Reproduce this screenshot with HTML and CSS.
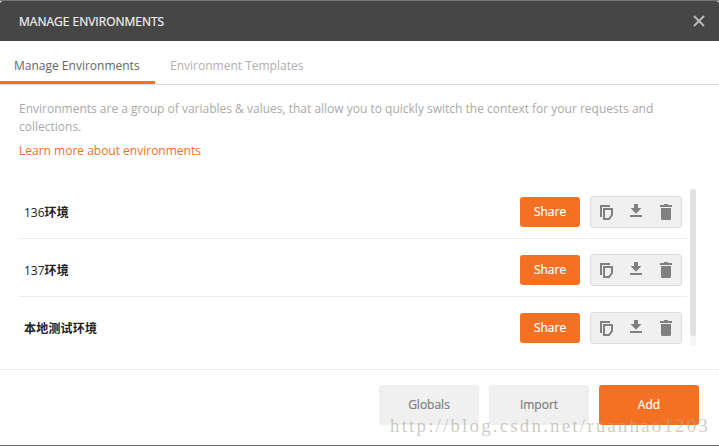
FILE: index.html
```html
<!DOCTYPE html>
<html lang="en">

<head>
    <meta charset="UTF-8">
    <meta name="viewport" content="width=device-width, initial-scale=1.0">
    <title>Manage Environments</title>
    <link rel="stylesheet" href="styles.css">
</head>

<body>
    <svg class="icon-defs">
        <symbol id="copy" viewBox="0 0 16 16">
            <path d="M3 13V2h9" fill="none" stroke="currentColor" stroke-width="2" />
            <path d="M6 5h8v6l-3 4H6z" fill="none" stroke="currentColor" stroke-width="2" />
        </symbol>
        <symbol id="download" viewBox="0 0 16 16">
            <path d="M6 0h4v4h3.5L8 9.8 2.5 4H6zM2 11h12v2H2z" fill="currentColor" />
        </symbol>
        <symbol id="trash" viewBox="0 0 16 16">
            <path d="M2 1h3.5l1-1h3l1 1H14v2H2zM3 4h10v10.5a1.5 1.5 0 0 1-1.5 1.5h-7A1.5 1.5 0 0 1 3 14.5z" fill="currentColor" />
        </symbol>
    </svg>

    <div class="modal">
        <header class="modal-header">
            <h1>MANAGE ENVIRONMENTS</h1>
            <svg class="close" viewBox="0 0 12 12">
                <path d="M1 1l10 10M11 1L1 11" fill="none" stroke="currentColor" stroke-width="2" />
            </svg>
        </header>

        <nav class="tabs">
            <div class="tab active">Manage Environments</div>
            <div class="tab">Environment Templates</div>
        </nav>

        <main>
            <p class="intro">Environments are a group of variables &amp; values, that allow you to quickly switch the context for your requests and<br>collections.</p>
            <a class="learn">Learn more about environments</a>

            <div class="list-wrap">
                <ul class="list">
                    <li class="row">
                        <span class="name">136<b>环境</b></span>
                        <button class="share">Share</button>
                        <div class="actions">
                            <svg class="icon"><use href="#copy" /></svg>
                            <svg class="icon"><use href="#download" /></svg>
                            <svg class="icon"><use href="#trash" /></svg>
                        </div>
                    </li>
                    <li class="row">
                        <span class="name">137<b>环境</b></span>
                        <button class="share">Share</button>
                        <div class="actions">
                            <svg class="icon"><use href="#copy" /></svg>
                            <svg class="icon"><use href="#download" /></svg>
                            <svg class="icon"><use href="#trash" /></svg>
                        </div>
                    </li>
                    <li class="row">
                        <span class="name"><b>本地测试环境</b></span>
                        <button class="share">Share</button>
                        <div class="actions">
                            <svg class="icon"><use href="#copy" /></svg>
                            <svg class="icon"><use href="#download" /></svg>
                            <svg class="icon"><use href="#trash" /></svg>
                        </div>
                    </li>
                </ul>
                <div class="scrollbar"><div class="thumb"></div></div>
            </div>
        </main>

        <footer>
            <button class="btn">Globals</button>
            <button class="btn">Import</button>
            <button class="btn primary">Add</button>
        </footer>
        <div class="watermark">http://blog.csdn.net/ruanhao1203</div>
    </div>
</body>

</html>
```
FILE: styles.css
```css
* {
    box-sizing: border-box;
}

body {
    margin: 0;
    background-color: #6c6c6c;
    font-family: "Open Sans", "Noto Sans CJK SC", sans-serif;
    font-size: 12px;
}

.icon-defs {
    display: none;
}

.modal {
    position: relative;
    display: flex;
    flex-direction: column;
    height: 446px;
    border-top: 1px solid #777;
    border-bottom: 1px solid #6c6c6c;
    background-color: #fff;
    overflow: hidden;
}

.modal-header {
    display: flex;
    align-items: center;
    justify-content: space-between;
    height: 40px;
    padding: 0 14px 0 19px;
    border-radius: 3px 3px 0 0;
    background-color: #464646;
    color: #f0f0f0;
}

h1 {
    margin: 0;
    font-size: 12px;
    font-weight: 400;
    -webkit-text-stroke: 0.2px;
}

.close {
    width: 12px;
    height: 12px;
    color: #b8b8b8;
}

.tabs {
    display: flex;
    height: 44px;
    border-bottom: 1px solid #dbdbdb;
}

.tab {
    padding: 0 15px;
    line-height: 49px;
    color: #b0b0b0;
    white-space: nowrap;
}

.tab.active {
    width: 155px;
    padding-left: 14px;
    border-bottom: 3px solid #f47023;
    color: #666;
}

main {
    height: 284px;
    padding: 15px 19px 0;
}

.intro {
    margin: 0;
    line-height: 18px;
    color: #a9a9a9;
    white-space: nowrap;
}

.learn {
    display: block;
    margin-top: 6px;
    line-height: 18px;
    color: #f47023;
}

.list-wrap {
    display: flex;
    margin-top: 21px;
}

.list {
    width: 668px;
    margin: 0;
    padding: 0;
    list-style: none;
}

.row {
    display: flex;
    align-items: center;
    height: 58px;
    padding: 15px 5px 10px;
    border-bottom: 1px solid #ebebeb;
}

.row:last-child {
    border-bottom-color: transparent;
}

.name {
    flex: 1;
    padding-bottom: 1px;
    color: #222;
}

.name b {
    letter-spacing: 0.2px;
}

button {
    padding: 0 0 1px;
    border: none;
    border-radius: 3px;
    font-family: inherit;
    font-size: 12px;
}

.share {
    width: 60px;
    height: 30px;
    margin-right: 10px;
    background-color: #f47023;
    color: #fff;
    -webkit-text-stroke: 0.2px;
}

.actions {
    display: flex;
    align-items: center;
    justify-content: space-between;
    width: 92px;
    height: 32px;
    padding: 0 7px;
    border: 1px solid #dbdbdb;
    border-radius: 3px;
    background-color: #f0f0f0;
    color: #808080;
}

.icon {
    width: 16px;
    height: 16px;
}

.scrollbar {
    width: 6px;
    height: 157px;
    margin: 8px 0 0 3px;
    border-radius: 3px;
    background-color: #f5f5f5;
}

.thumb {
    height: 147px;
    border-radius: 3px;
    background-color: #e0e0e0;
}

footer {
    display: flex;
    justify-content: flex-end;
    gap: 10px;
    height: 76px;
    padding: 15px 20px 0 0;
    border-top: 1px solid #ebebeb;
}

.btn {
    width: 100px;
    height: 40px;
    background-color: #f0f0f0;
    color: #808080;
    -webkit-text-stroke: 0.2px;
}

.btn.primary {
    background-color: #f47023;
    color: #fff;
}

/* laid over the footer buttons */
.watermark {
    position: absolute;
    right: 9px;
    bottom: 8px;
    font-family: "Liberation Serif", serif;
    font-size: 19px;
    line-height: 22px;
    letter-spacing: 2.15px;
    color: rgba(170, 170, 155, 0.6);
    white-space: nowrap;
}
```
